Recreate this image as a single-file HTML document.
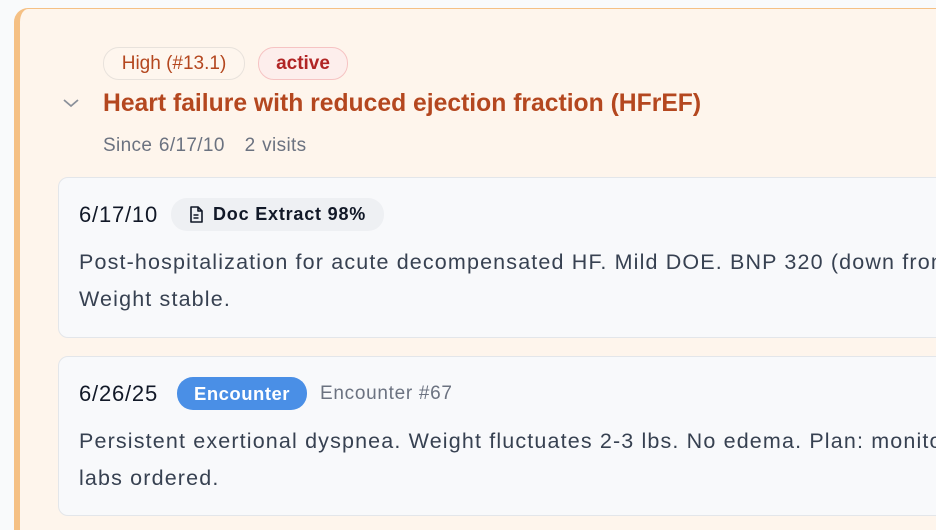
<!DOCTYPE html>
<html><head><style>
html,body{margin:0;width:936px;height:530px;overflow:hidden}
body{background:#f9fafb;font-family:"Liberation Sans",sans-serif;position:relative}
.card{position:absolute;left:14px;top:8px;width:1000px;height:540px;background:#fef5ec;border-top:1px solid #f5c084;border-left:6px solid #f5c084;border-radius:14px 0 0 0}
.abs{position:absolute;white-space:nowrap}
.pill{position:absolute;height:31px;line-height:31px;border-radius:16px;font-size:19px;text-align:center}
.inner{position:absolute;left:58px;width:960px;background:#f8f9fb;border:1px solid #e3e6ea;border-radius:10px}
.body{position:absolute;left:20px;font-size:21.5px;letter-spacing:1.15px;color:#374151;line-height:37px;white-space:nowrap}
.date{position:absolute;left:20px;font-size:22px;letter-spacing:0.8px;color:#111827}
</style></head><body>
<div class="card"></div>
<div class="pill" style="left:103px;top:47px;width:140px;border:1px solid #e8e2dc;background:#fef6ee;color:#b4471f">High (#13.1)</div>
<div class="pill" style="left:258px;top:47px;width:88px;border:1px solid #f6c3c3;background:#fdeeec;color:#b12525;font-weight:bold">active</div>
<svg class="abs" style="left:62px;top:97px" width="18" height="12" viewBox="0 0 18 12"><path d="M2 3l7 6 7-6" fill="none" stroke="#8a909a" stroke-width="1.8"/></svg>
<div class="abs" style="left:103px;top:90px;font-size:24.7px;font-weight:bold;color:#b4471f">Heart failure with reduced ejection fraction (HFrEF)</div>
<div class="abs" style="left:103px;top:135px;font-size:19px;letter-spacing:0.35px;word-spacing:1px;color:#6b7280">Since 6/17/10&nbsp;&nbsp;&nbsp;2 visits</div>

<div class="inner" style="top:177px;height:159px">
<div class="date" style="top:24px">6/17/10</div>
<div class="pill" style="left:112px;top:20px;width:213px;height:33px;line-height:33px;background:#eef0f3;color:#111827;font-weight:bold;font-size:18px;letter-spacing:0.8px;text-align:left">
<svg style="position:absolute;left:18px;top:8px" width="14" height="17" viewBox="0 0 14 17"><path d="M2 1h7l4 4v11H2z M9 1v4h4 M4.5 9h5 M4.5 12h5" fill="none" stroke="#111827" stroke-width="1.6" stroke-linejoin="round"/></svg>
<span style="position:absolute;left:42px">Doc Extract 98%</span></div>
<div class="body" style="top:66px">Post-hospitalization for acute decompensated HF. Mild DOE. BNP 320 (down from<br>Weight stable.</div>
</div>

<div class="inner" style="top:356px;height:158px">
<div class="date" style="top:24px">6/26/25</div>
<div class="pill" style="left:118px;top:20px;width:130px;height:33px;line-height:33px;background:#4a8fe6;color:#fff;font-weight:bold;font-size:18.5px;letter-spacing:0.5px">Encounter</div>
<div class="abs" style="left:261px;top:26px;font-size:19px;letter-spacing:0.7px;color:#6b7280">Encounter #67</div>
<div class="body" style="top:66px">Persistent exertional dyspnea. Weight fluctuates 2-3 lbs. No edema. Plan: monito<br>labs ordered.</div>
</div>
</body></html>
